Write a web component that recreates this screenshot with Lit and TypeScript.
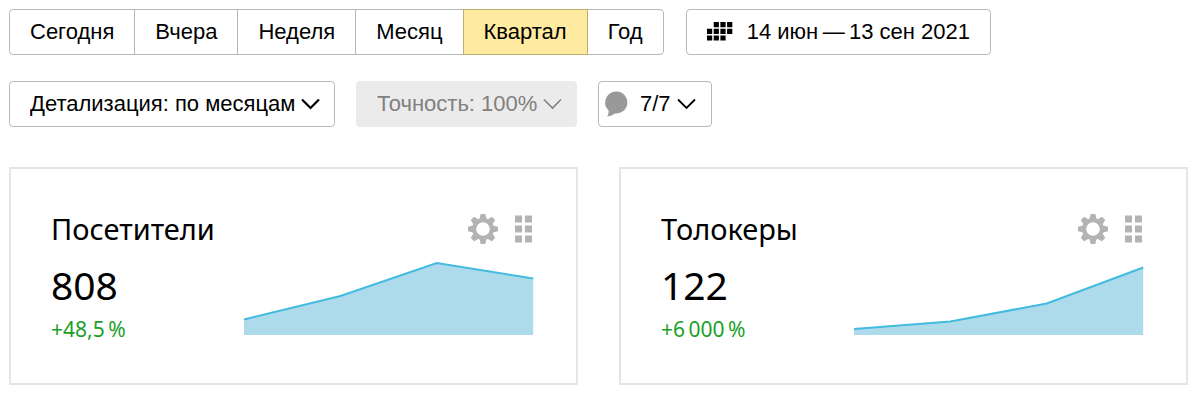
import { LitElement, html, svg, css } from "lit";
import { customElement, property, state } from "lit/decorators.js";
import { classMap } from "lit/directives/class-map.js";

const CHART_WIDTH = 288;
const CHART_HEIGHT = 72;

@customElement("metric-card")
class MetricCard extends LitElement {
  @property() heading = "";
  @property() value = "";
  @property() change = "";
  @property({ attribute: false }) points: number[] = [];

  static styles = css`
    :host {
      display: block;
      box-sizing: border-box;
      border: 2px solid #e5e5e5;
      padding: 40px 43px 36px 40px;
      font-family: "Noto Sans", "Open Sans", sans-serif;
      color: #000;
    }
    .header {
      display: flex;
      align-items: center;
      justify-content: space-between;
    }
    .title {
      margin: 0;
      font-size: 29px;
      line-height: 40px;
      font-weight: 400;
    }
    .tools {
      display: flex;
      align-items: center;
      gap: 17px;
    }
    .tool {
      display: block;
      margin: 0;
      padding: 0;
      border: 0;
      background: none;
      color: #b2b4b3;
      cursor: pointer;
    }
    .tool svg {
      display: block;
    }
    .body {
      display: grid;
      grid-template-columns: 2fr 3fr;
      align-items: end;
      padding-top: 10px;
    }
    .value {
      font-size: 39px;
      line-height: 52px;
    }
    .change {
      font-size: 21px;
      line-height: 36px;
      color: #1a9f29;
    }
    .chart {
      display: block;
      width: 100%;
      height: 72px;
      margin-bottom: 12px;
      overflow: visible;
    }
    .area {
      fill: #aedbeb;
    }
    .line {
      fill: none;
      stroke: #42bbdf;
      stroke-width: 2;
      vector-effect: non-scaling-stroke;
    }
  `;

  render() {
    const step = CHART_WIDTH / (this.points.length - 1);
    const coords = this.points
      .map((p, i) => `${i * step},${CHART_HEIGHT - p}`)
      .join(" ");
    return html`
      <div class="header">
        <h2 class="title">${this.heading}</h2>
        <div class="tools">
          <button class="tool" type="button" aria-label="Настройки">
            <svg width="30" height="30" viewBox="-15 -15 30 30" fill="currentColor">
              ${[0, 45, 90, 135, 180, 225, 270, 315].map(
                (a) => svg`<path transform="rotate(${a})"
                  d="M-4.8 -8.5Q-2.9 -10 -2.6 -14.2Q-2.5 -15 -1.6 -15H1.6Q2.5 -15 2.6 -14.2Q2.9 -10 4.8 -8.5Z"/>`
              )}
              <circle r="8.8" fill="none" stroke="currentColor" stroke-width="4" />
            </svg>
          </button>
          <button class="tool" type="button" aria-label="Переместить">
            <svg width="18" height="28" viewBox="0 0 18 28" fill="currentColor">
              ${[0, 10, 20].map(
                (y) => svg`<path d="M0 ${y + 0.5}h7v7h-7zM10 ${y + 0.5}h7v7h-7z"/>`
              )}
            </svg>
          </button>
        </div>
      </div>
      <div class="body">
        <div>
          <div class="value">${this.value}</div>
          <div class="change">${this.change}</div>
        </div>
        <svg class="chart" viewBox="0 0 288 72" preserveAspectRatio="none" role="img" aria-label=${this.heading}>
          <polygon class="area" points="0,72 ${coords} 288,72" />
          <polyline class="line" points=${coords} />
        </svg>
      </div>
    `;
  }
}

@customElement("app-root")
class AppRoot extends LitElement {
  @state() private period = "Квартал";

  static styles = css`
    :host {
      display: block;
      padding: 9px 12px 20px 9px;
      font-family: "Liberation Sans", Arial, sans-serif;
      background: #fff;
      color: #000;
    }
    .row {
      display: flex;
      flex-wrap: wrap;
      gap: 22px;
    }
    .filters {
      gap: 21px;
      margin-top: 26px;
    }
    .control,
    .period {
      box-sizing: border-box;
      height: 46px;
      margin: 0;
      border: 1px solid #b8b8b8;
      background: #fff;
      color: #000;
      font-family: inherit;
      font-size: 22px;
      line-height: 44px;
      cursor: pointer;
    }
    .control {
      border-radius: 4px;
    }
    .periods {
      display: flex;
    }
    .period {
      padding: 0 20px;
    }
    .period + .period {
      margin-left: -1px;
    }
    .period:first-child {
      border-radius: 4px 0 0 4px;
    }
    .period:last-child {
      border-radius: 0 4px 4px 0;
    }
    .active {
      z-index: 1;
      background: #ffeba0;
      border-color: #bfae6c;
    }
    .date {
      display: flex;
      align-items: center;
      gap: 14px;
      padding: 0 20px;
    }
    .select {
      position: relative;
      display: flex;
    }
    .select .control {
      appearance: none;
      padding: 0 38px 0 20px;
    }
    .select .control:disabled {
      border-color: #ebebeb;
      background: #ebebeb;
      color: #808080;
      opacity: 1;
      cursor: default;
    }
    .arrow {
      position: absolute;
      right: 15px;
      top: 17px;
      display: flex;
      pointer-events: none;
    }
    .muted {
      color: #808080;
    }
    .notes {
      display: flex;
      align-items: center;
      padding: 0 15px 0 6px;
    }
    .count {
      margin: 0 6px 0 11px;
    }
    .cards {
      display: grid;
      grid-template-columns: repeat(auto-fit, minmax(440px, 1fr));
      gap: 41px;
      margin-top: 40px;
    }
  `;

  private chevron(width: number) {
    return html`<svg width="19" height="12" viewBox="0 0 19 12" fill="none" stroke="currentColor" stroke-width=${width} aria-hidden="true">
      <path d="M1 1.5L9.5 10L18 1.5" />
    </svg>`;
  }

  render() {
    return html`
      <div class="row">
        <div class="periods" role="group" aria-label="Период">
          ${["Сегодня", "Вчера", "Неделя", "Месяц", "Квартал", "Год"].map(
            (name) => html`<button
              type="button"
              class=${classMap({ period: true, active: name === this.period })}
              aria-pressed=${name === this.period ? "true" : "false"}
              @click=${() => (this.period = name)}
            >${name}</button>`
          )}
        </div>
        <button class="control date" type="button">
          <svg width="26" height="20" viewBox="0 0 26 20" fill="currentColor" aria-hidden="true">
            <path d="M6.7 0h5.2v5.2h-5.2zM13.4 0h5.2v5.2h-5.2zM20.1 0h5.2v5.2h-5.2zM0 6.7h5.2v5.2h-5.2zM6.7 6.7h5.2v5.2h-5.2zM13.4 6.7h5.2v5.2h-5.2zM20.1 6.7h5.2v5.2h-5.2zM0 13.4h5.2v5.2h-5.2zM6.7 13.4h5.2v5.2h-5.2zM13.4 13.4h5.2v5.2h-5.2z" />
          </svg>
          <span>14 июн\u2009—\u200913 сен 2021</span>
        </button>
      </div>
      <div class="row filters">
        <div class="select">
          <select class="control" aria-label="Детализация">
            <option>Детализация: по месяцам</option>
          </select>
          <span class="arrow">${this.chevron(2.2)}</span>
        </div>
        <div class="select">
          <select class="control" aria-label="Точность" disabled>
            <option>Точность: 100%</option>
          </select>
          <span class="arrow muted">${this.chevron(1.6)}</span>
        </div>
        <button class="control notes" type="button" aria-haspopup="menu">
          <svg width="24" height="26" viewBox="0 0 24 26" fill="#999" aria-hidden="true">
            <path d="M12 0.5A11 11 0 1 1 10 22.4Q7 24.8 2.2 25.4Q4 22.6 3.6 19.4A11 11 0 0 1 12 0.5Z" />
          </svg>
          <span class="count">7/7</span>
          ${this.chevron(1.8)}
        </button>
      </div>
      <div class="cards">
        <metric-card heading="Посетители" value="808" change=${"+48,5\u2009%"} .points=${[15.5, 39, 72, 56.5]}></metric-card>
        <metric-card heading="Толокеры" value="122" change=${"+6\u2009000\u2009%"} .points=${[6, 13.5, 31.5, 67.5]}></metric-card>
      </div>
    `;
  }
}
